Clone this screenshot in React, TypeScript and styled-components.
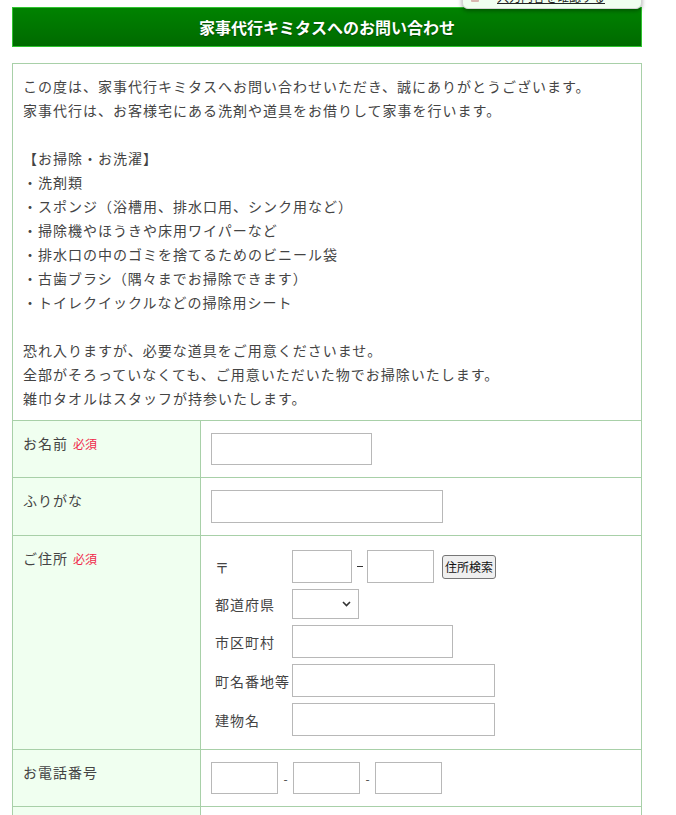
import React from "react";
import styled, { createGlobalStyle } from "styled-components";

const Global = createGlobalStyle`
  html, body { margin: 0; padding: 0; background: #fff; }
  body { font-family: "Noto Sans CJK JP", "Noto Sans", sans-serif; color: #444; }
  * { box-sizing: border-box; }
`;

const Page = styled.div`
  position: relative;
  width: 676px;
  padding: 7px 34px 0 12px;
`;

const Popup = styled.div`
  position: absolute;
  top: -21px;
  left: 462px;
  width: 180px;
  height: 30px;
  background: #f0fff0;
  border: 1px solid #d4d4d4;
  border-radius: 6px;
  box-shadow: 0 2px 4px rgba(0, 0, 0, 0.35);
  display: flex;
  align-items: flex-end;
  gap: 18px;
  padding: 0 10px 4px 8px;
  z-index: 5;
`;

const PopupIcon = styled.span`
  width: 8px;
  height: 8px;
  background: #d8b8b0;
  border-radius: 1px;
  margin-bottom: 2px;
`;

const PopupLink = styled.a`
  font-size: 12px;
  line-height: 14px;
  color: #222;
  text-decoration: underline;
  white-space: nowrap;
`;

const Header = styled.h1`
  margin: 0;
  height: 40px;
  border: 1px solid #2fc42f;
  background: linear-gradient(#008200, #006a00);
  color: #fff;
  font-size: 16px;
  font-weight: bold;
  display: flex;
  align-items: center;
  justify-content: center;
  text-shadow: 0 1px 1px rgba(0, 0, 0, 0.35);
`;

const Frame = styled.div`
  margin-top: 16px;
  border: 1px solid #a8d0a8;
  border-bottom: none;
`;

const Intro = styled.div`
  padding: 10px 12px 10px 10px;
  font-size: 14px;
  line-height: 24px;
  letter-spacing: 1px;
  border-bottom: 1px solid #a8d0a8;
`;

const Line = styled.div`
  min-height: 24px;
  white-space: nowrap;
`;

const Row = styled.div`
  display: grid;
  grid-template-columns: 188px 1fr;
  border-bottom: 1px solid #a8d0a8;
`;

const Label = styled.div`
  background: #f0fff0;
  border-right: 1px solid #a8d0a8;
  padding: 10px 10px;
  font-size: 14px;
  line-height: 24px;
  letter-spacing: 1px;
  white-space: nowrap;
`;

const Required = styled.span`
  color: #f0284a;
  font-size: 12px;
  letter-spacing: 0;
  margin-left: 5px;
`;

const Value = styled.div<{ $pad?: string }>`
  padding: ${(p) => p.$pad ?? "12px 10px"};
  display: flex;
  align-items: center;
  min-height: 56px;
`;

const Input = styled.input<{ $w: number; $h?: number }>`
  width: ${(p) => p.$w}px;
  height: ${(p) => p.$h ?? 32}px;
  border: 1px solid #b8b8b8;
  background: #fff;
  margin: 0;
  padding: 2px 4px;
  font-size: 14px;
  outline: none;
`;

const Dash = styled.span`
  width: 15px;
  text-align: center;
  font-size: 12px;
  color: #444;
`;

const AddressGrid = styled.div`
  display: grid;
  grid-template-columns: 77px auto;
  row-gap: 6px;
  align-items: center;
`;

const SubLabel = styled.div`
  font-size: 14px;
  letter-spacing: 1px;
  line-height: 20px;
  white-space: nowrap;
`;

const Postal = styled.div`
  display: flex;
  align-items: center;
`;

const PostDash = styled.span`
  width: 15px;
  display: flex;
  justify-content: center;
  &::before {
    content: "";
    width: 6px;
    height: 1px;
    background: #333;
  }
`;

const SearchButton = styled.button`
  margin-left: 8px;
  height: 24px;
  padding: 0 2px;
  font-size: 12px;
  font-family: "Noto Sans CJK JP", sans-serif;
  color: #111;
  background: #efefef;
  border: 1px solid #767676;
  border-radius: 3px;
  letter-spacing: 0;
`;

const SelectWrap = styled.div`
  position: relative;
  width: 67px;
  height: 30px;
`;

const Select = styled.select`
  appearance: none;
  width: 100%;
  height: 100%;
  border: 1px solid #b8b8b8;
  background: #fff;
  border-radius: 0;
  margin: 0;
  outline: none;
`;

const Chevron = styled.svg`
  position: absolute;
  right: 8px;
  top: 12px;
  pointer-events: none;
`;

export default function App() {
  const intro = [
    "この度は、家事代行キミタスへお問い合わせいただき、誠にありがとうございます。",
    "家事代行は、お客様宅にある洗剤や道具をお借りして家事を行います。",
    "",
    "【お掃除・お洗濯】",
    "・洗剤類",
    "・スポンジ（浴槽用、排水口用、シンク用など）",
    "・掃除機やほうきや床用ワイパーなど",
    "・排水口の中のゴミを捨てるためのビニール袋",
    "・古歯ブラシ（隅々までお掃除できます）",
    "・トイレクイックルなどの掃除用シート",
    "",
    "恐れ入りますが、必要な道具をご用意くださいませ。",
    "全部がそろっていなくても、ご用意いただいた物でお掃除いたします。",
    "雑巾タオルはスタッフが持参いたします。",
  ];

  return (
    <>
      <Global />
      <Page>
        <Popup>
          <PopupIcon />
          <PopupLink>入力内容を確認する</PopupLink>
        </Popup>
        <Header>家事代行キミタスへのお問い合わせ</Header>
        <Frame>
          <Intro>
            {intro.map((t, i) => (
              <Line key={i}>{t}</Line>
            ))}
          </Intro>

          <Row>
            <Label>
              お名前<Required>必須</Required>
            </Label>
            <Value>
              <Input $w={161} />
            </Value>
          </Row>

          <Row>
            <Label>ふりがな</Label>
            <Value>
              <Input $w={232} $h={33} />
            </Value>
          </Row>

          <Row>
            <Label>
              ご住所<Required>必須</Required>
            </Label>
            <Value $pad="14px 14px 13px 14px">
              <AddressGrid>
                <SubLabel>〒</SubLabel>
                <Postal>
                  <Input $w={60} $h={33} />
                  <PostDash />
                  <Input $w={67} $h={33} />
                  <SearchButton>住所検索</SearchButton>
                </Postal>
                <SubLabel>都道府県</SubLabel>
                <SelectWrap>
                  <Select>
                    <option></option>
                  </Select>
                  <Chevron width="9" height="6" viewBox="0 0 9 6">
                    <path d="M1 1 L4.5 4.5 L8 1" fill="none" stroke="#333" strokeWidth="1.6" />
                  </Chevron>
                </SelectWrap>
                <SubLabel>市区町村</SubLabel>
                <Input $w={161} $h={33} />
                <SubLabel>町名番地等</SubLabel>
                <Input $w={203} $h={33} />
                <SubLabel>建物名</SubLabel>
                <Input $w={203} $h={33} />
              </AddressGrid>
            </Value>
          </Row>

          <Row>
            <Label>お電話番号</Label>
            <Value>
              <Input $w={67} />
              <Dash>-</Dash>
              <Input $w={67} />
              <Dash>-</Dash>
              <Input $w={67} />
            </Value>
          </Row>

          <Row>
            <Label>
              メールアドレス<Required>必須</Required>
            </Label>
            <Value>
              <Input $w={232} />
            </Value>
          </Row>
        </Frame>
      </Page>
    </>
  );
}
